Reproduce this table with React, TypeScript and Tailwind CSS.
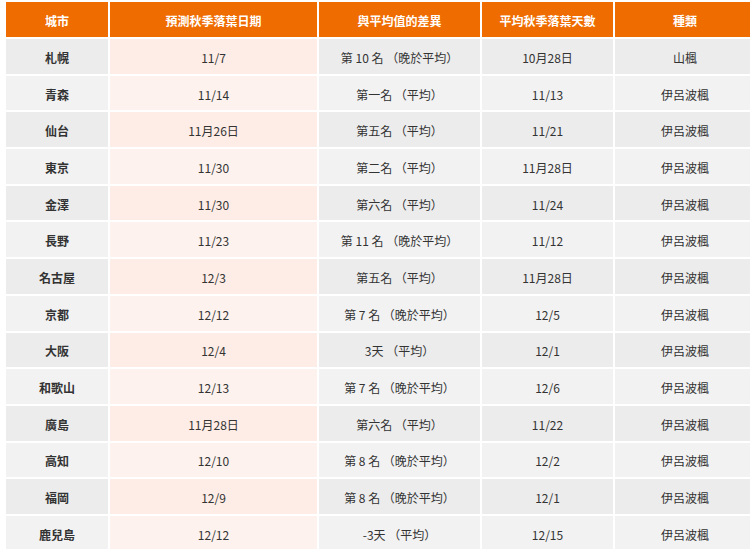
import React from "react";

const headers = ["城市", "預測秋季落葉日期", "與平均值的差異", "平均秋季落葉天數", "種類"];

const rows: string[][] = [
  ["札幌", "11/7", "第 10 名 （晚於平均）", "10月28日", "山楓"],
  ["青森", "11/14", "第一名 （平均）", "11/13", "伊呂波楓"],
  ["仙台", "11月26日", "第五名 （平均）", "11/21", "伊呂波楓"],
  ["東京", "11/30", "第二名 （平均）", "11月28日", "伊呂波楓"],
  ["金澤", "11/30", "第六名 （平均）", "11/24", "伊呂波楓"],
  ["長野", "11/23", "第 11 名 （晚於平均）", "11/12", "伊呂波楓"],
  ["名古屋", "12/3", "第五名 （平均）", "11月28日", "伊呂波楓"],
  ["京都", "12/12", "第 7 名 （晚於平均）", "12/5", "伊呂波楓"],
  ["大阪", "12/4", "3天 （平均）", "12/1", "伊呂波楓"],
  ["和歌山", "12/13", "第 7 名 （晚於平均）", "12/6", "伊呂波楓"],
  ["廣島", "11月28日", "第六名 （平均）", "11/22", "伊呂波楓"],
  ["高知", "12/10", "第 8 名 （晚於平均）", "12/2", "伊呂波楓"],
  ["福岡", "12/9", "第 8 名 （晚於平均）", "12/1", "伊呂波楓"],
  ["鹿兒島", "12/12", "-3天 （平均）", "12/15", "伊呂波楓"],
];

export default function App() {
  return (
    <div
      className="w-[750px] h-[549px] overflow-hidden bg-white pl-[6px] pt-[2px]"
      style={{ fontFamily: '"Noto Sans CJK TC", "Noto Sans", sans-serif' }}
    >
      <div className="grid grid-cols-[102px_207px_161px_131px_140px] gap-[2px] w-[749px]">
        {headers.map((h) => (
          <div
            key={h}
            className="h-[35px] pt-[2px] flex items-center justify-center bg-[#ef6c00] text-white text-[12px] font-bold"
          >
            {h}
          </div>
        ))}
        {rows.map((r, i) => {
          const even = i % 2 === 0;
          return (
            <React.Fragment key={r[0]}>
              <div
                className={`h-[34.7px] pt-[3px] flex items-center justify-center text-[12px] font-bold text-[#333333] ${
                  even ? "bg-[#ececec]" : "bg-[#f2f2f2]"
                }`}
              >
                {r[0]}
              </div>
              <div
                className={`h-[34.7px] pt-[3px] flex items-center justify-center text-[12px] text-[#333333] ${
                  even ? "bg-[#fdede6]" : "bg-[#fdf2ed]"
                }`}
              >
                {r[1]}
              </div>
              {r.slice(2).map((c, j) => (
                <div
                  key={j}
                  className={`h-[34.7px] pt-[3px] flex items-center justify-center text-[12px] text-[#333333] ${
                    even ? "bg-[#ececec]" : "bg-[#f2f2f2]"
                  }`}
                >
                  {c}
                </div>
              ))}
            </React.Fragment>
          );
        })}
      </div>
    </div>
  );
}
